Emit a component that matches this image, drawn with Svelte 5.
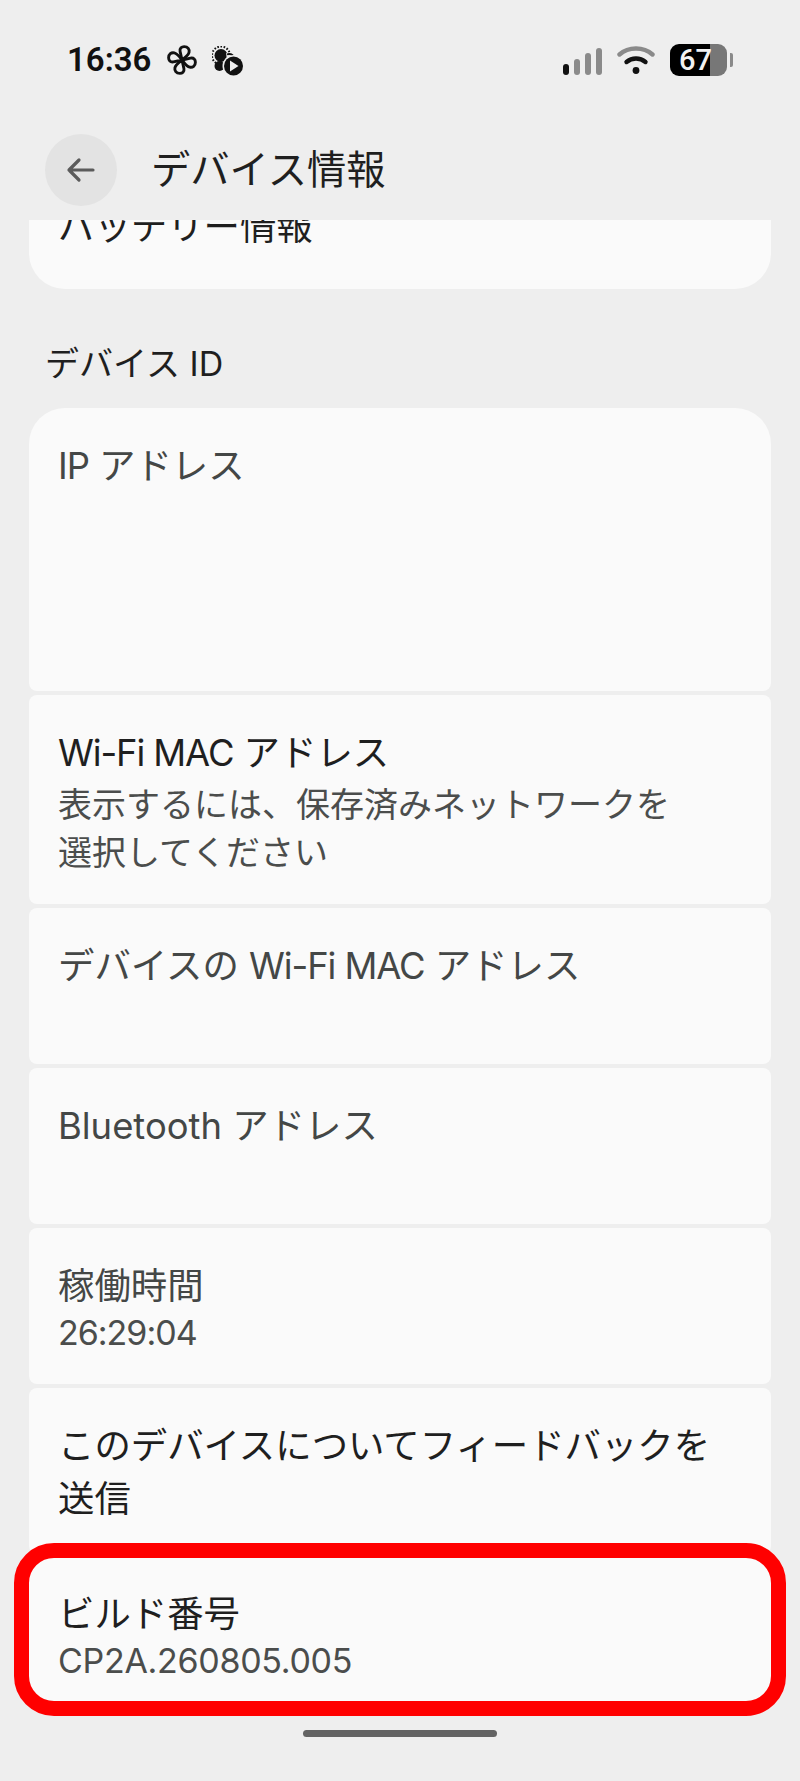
<script lang="ts">
	const blades = [0, 90, 180, 270];
</script>

<div class="phone">
	<div class="status">
		<div class="left">
			<span class="time">16:36</span>
			<svg class="fan" width="30" height="30" viewBox="0 0 28 28" fill="none" stroke="#111" stroke-width="2.7" stroke-linejoin="round">
				{#each blades as angle}
					<path
						d="M14 14L12.2 6C11.6 3 13.8 1.5 16 1.5C19.5 1.5 21.2 4 20.6 6.8C20 9.8 16.5 12 14 14Z"
						transform="rotate({angle} 14 14)"
					/>
				{/each}
			</svg>
			<svg class="weather" width="32" height="30" viewBox="0 0 32 30">
				<circle cx="9" cy="9.5" r="6.5" fill="#111" />
				<circle cx="9" cy="9.5" r="9" fill="none" stroke="#111" stroke-width="2" stroke-dasharray="1.6 1.6" />
				<path d="M14 7h5a5 5 0 0 1 5 5v2h-9z" fill="#eee" />
				<path d="M15 8.5a4.5 4.5 0 0 1 6.5 2.5" fill="none" stroke="#111" stroke-width="2" />
				<circle cx="7.5" cy="20" r="5" fill="#111" />
				<circle cx="21.5" cy="20" r="11" fill="#eee" />
				<circle cx="21.5" cy="20" r="9.5" fill="#111" />
				<path d="M18 14.5v11l8.5-5.5z" fill="#eee" />
			</svg>
		</div>
		<div class="right">
			<div class="bars">
				<i class="on" style="height: 11px"></i>
				<i style="height: 16px"></i>
				<i style="height: 22px"></i>
				<i style="height: 27px"></i>
			</div>
			<svg class="wifi" width="38" height="28" viewBox="0 0 38 28" fill="none" stroke-linecap="round">
				<path d="M2.5 8.5C11.5 .5 26.5 .5 35.5 8.5" stroke="#8a8a8a" stroke-width="4.4" />
				<path d="M9.5 16C15 11.4 23 11.4 28.5 16" stroke="#111" stroke-width="4.4" />
				<circle cx="19" cy="24.5" r="3.4" fill="#111" />
			</svg>
			<div class="battery">
				<div class="cell"><span>67</span></div>
				<div class="tip"></div>
			</div>
		</div>
	</div>

	<div class="appbar">
		<button class="back" aria-label="戻る">
			<svg width="32" height="32" viewBox="0 0 32 32" fill="none" stroke="#5b5b5b" stroke-width="3.2" stroke-linecap="round" stroke-linejoin="round">
				<path d="M28 16H4M14 6 4 16l10 10" />
			</svg>
		</button>
		<h1>デバイス情報</h1>
	</div>

	<main>
		<div class="clipped"><span>バッテリー情報</span></div>

		<h2>デバイス ID</h2>

		<section>
			<div class="row first ip"><p class="muted"><span class="tight">IP</span> アドレス</p></div>
			<div class="row">
				<p><span class="tight">Wi-Fi MAC</span> アドレス</p>
				<p class="sub">表示するには、保存済みネットワークを<br />選択してください</p>
			</div>
			<div class="row short"><p class="muted">デバイスの <span class="tight">Wi-Fi MAC</span> アドレス</p></div>
			<div class="row short"><p class="muted">Bluetooth アドレス</p></div>
			<div class="row short">
				<p class="muted">稼働時間</p>
				<p class="sub num uptime">26:29:04</p>
			</div>
			<div class="row feedback"><p>このデバイスについてフィードバックを<br />送信</p></div>
			<div class="row build">
				<p>ビルド番号</p>
				<p class="sub num build-no">CP2A.260805.005</p>
				<div class="ring"></div>
			</div>
		</section>
	</main>

	<div class="home"></div>
</div>

<style>
	:global(body) {
		background: #eeeeee;
	}
	.phone {
		width: 800px;
		height: 1781px;
		overflow: hidden;
		background: #eeeeee;
		font-family: Inter, 'Noto Sans CJK JP', sans-serif;
		color: #1f1f1f;
	}
	.status {
		height: 120px;
		box-sizing: border-box;
		padding: 44px 67px 0;
		display: flex;
		justify-content: space-between;
		align-items: flex-start;
	}
	.left {
		display: flex;
		align-items: center;
		height: 32px;
	}
	.time {
		font-family: Roboto, sans-serif;
		font-size: 33px;
		font-weight: 600;
		color: #111;
		line-height: 32px;
	}
	.fan {
		margin-left: 16px;
	}
	.weather {
		margin-left: 15px;
		margin-top: 2px;
	}
	.right {
		display: flex;
		align-items: center;
		height: 32px;
	}
	.bars {
		display: flex;
		align-items: flex-end;
		gap: 5px;
		height: 29px;
		margin-right: 15px;
	}
	.bars i {
		width: 6px;
		border-radius: 3px;
		background: #8a8a8a;
	}
	.bars i.on {
		background: #111;
	}
	.battery {
		display: flex;
		align-items: center;
		margin-left: 15px;
	}
	.cell {
		width: 57px;
		height: 32px;
		border-radius: 9px;
		background: linear-gradient(to right, #000 40px, #777 40px);
		display: flex;
		align-items: center;
		justify-content: center;
	}
	.cell span {
		font-family: Roboto, sans-serif;
		color: #f2f2f2;
		font-size: 29px;
		font-weight: 500;
		line-height: 32px;
		margin-right: 6px;
	}
	.tip {
		width: 3px;
		height: 14px;
		margin-left: 3px;
		background: #8a8a8a;
		border-radius: 0 2px 2px 0;
	}
	.appbar {
		height: 100px;
		box-sizing: border-box;
		padding: 14px 0 0 45px;
		display: flex;
		align-items: flex-start;
	}
	.back {
		width: 72px;
		height: 72px;
		border: 0;
		border-radius: 50%;
		background: #e3e3e3;
		padding: 0;
		display: flex;
		align-items: center;
		justify-content: center;
	}
	h1 {
		margin: 0 0 0 34px;
		font-size: 39.3px;
		font-weight: 400;
		line-height: 72px;
		color: #1f1f1f;
	}
	main {
		padding: 0 29px;
	}
	.clipped {
		height: 69px;
		overflow: hidden;
		background: #fafafa;
		border-radius: 0 0 36px 36px;
		padding: 0 29px;
	}
	.clipped span {
		display: block;
		margin-top: -16px;
		font-size: 36.4px;
		line-height: 47px;
	}
	h2 {
		margin: 0;
		height: 119px;
		box-sizing: border-box;
		padding: 52px 16px 0;
		font-size: 34px;
		font-weight: 400;
		line-height: 46px;
		color: #1f1f1f;
	}
	section {
		display: flex;
		flex-direction: column;
		gap: 4px;
	}
	.row {
		position: relative;
		box-sizing: border-box;
		background: #fafafa;
		border-radius: 8px;
		padding: 32px 29px 27px;
	}
	.first {
		border-radius: 36px 36px 8px 8px;
	}
	.ip {
		height: 283px;
	}
	.short {
		height: 156px;
	}
	.feedback {
		height: 166px;
	}
	.build {
		height: 143px;
		padding-top: 30px;
		border-radius: 8px 8px 25px 25px;
	}
	.ring {
		position: absolute;
		inset: -15px;
		border: 15px solid #ff0000;
		border-radius: 40px;
	}
	p {
		margin: 0;
		font-size: 36.4px;
		line-height: 53px;
	}
	.tight {
		letter-spacing: -1.1px;
	}
	.muted {
		color: #444746;
	}
	.sub {
		margin-top: 1px;
		font-size: 34px;
		line-height: 48px;
		color: #4b4d4c;
	}
	.sub.num {
		margin-top: -4px;
	}
	.uptime {
		letter-spacing: -1px;
	}
	.build-no {
		letter-spacing: -0.3px;
	}
	.home {
		width: 194px;
		height: 7px;
		margin: 29px auto 0;
		border-radius: 4px;
		background: #636363;
	}
</style>
